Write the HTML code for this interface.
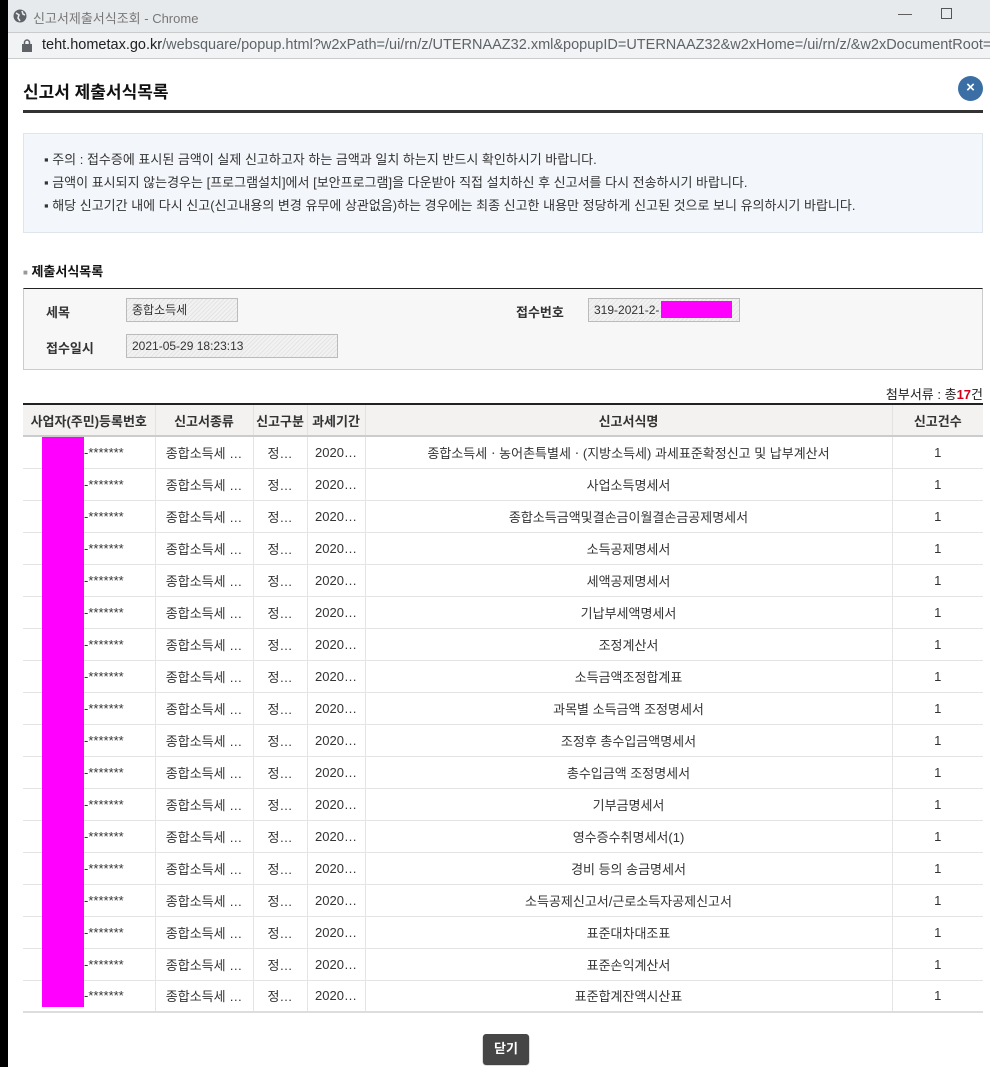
<!DOCTYPE html>
<html><head><meta charset="utf-8"><style>
*{margin:0;padding:0;box-sizing:border-box}
body{width:990px;height:1067px;overflow:hidden;background:#fff;font-family:"Liberation Sans","Noto Sans CJK KR","NanumGothic",sans-serif;font-size:12px;color:#333;position:relative}
.abs{position:absolute}
.strip{left:0;top:0;width:8px;height:1067px;background:#000}
.tb{left:8px;top:0;width:982px;height:33px;background:#e7eaed;border-bottom:1px solid #c9cbcd}
.ab{left:8px;top:33px;width:982px;height:26px;background:#f1f3f4;border-bottom:1px solid #c9cbcd}
.inp{background:repeating-linear-gradient(135deg,#f2f2f2 0 2px,#e4e4e4 2px 3px);border:1px solid #bbb;font-size:12px;padding-left:5px;line-height:22px;color:#333}
table{border-collapse:collapse;position:absolute;left:23px;top:403px;width:960px;border-top:2px solid #222}
th{background:#f3f2f0;height:32px;font-size:13px;color:#333;border-bottom:2px solid #ccc;border-left:1px solid #e2e2e2;font-weight:bold}
td{height:32px;border-bottom:1px solid #e4e4e4;border-left:1px solid #e4e4e4;text-align:center;font-size:13px;color:#333}
tr:last-child td{border-bottom:2px solid #ddd}
th:first-child,td:first-child{border-left:none}
.notice div{height:23px;line-height:23px}
</style></head><body>
<div class="abs strip"></div>
<div class="abs tb">
<svg class="abs" style="left:5px;top:9px" width="14" height="14"><circle cx="7" cy="7" r="6.5" fill="#5f6368"/><path d="M3 4 L6 6 L5 9 L7 12 M9 2 L10 5 L12 6" stroke="#e7eaed" stroke-width="1.6" fill="none"/></svg>
<span class="abs" style="left:25px;top:8px;font-size:13px;color:#777">신고서제출서식조회 - Chrome</span>
<span class="abs" style="left:890px;top:5px;font-size:14px;color:#555">—</span>
<span class="abs" style="left:933px;top:8px;width:11px;height:11px;border:1px solid #555"></span>
</div>
<div class="abs ab">
<svg class="abs" style="left:14px;top:6px" width="10" height="13"><rect x="0" y="5" width="10" height="8" fill="#5f6368"/><path d="M2.5 5V3.5a2.5 2.5 0 0 1 5 0V5" stroke="#5f6368" stroke-width="1.5" fill="none"/></svg>
<span class="abs" style="left:34px;top:4px;font-size:14.5px;color:#202124;white-space:nowrap">teht.hometax.go.kr<span style="color:#5f6368">/websquare/popup.html?w2xPath=/ui/rn/z/UTERNAAZ32.xml&amp;popupID=UTERNAAZ32&amp;w2xHome=/ui/rn/z/&amp;w2xDocumentRoot=</span></span>
</div>
<div class="abs" style="left:23px;top:78px;font-size:17px;font-weight:bold;color:#111">신고서 제출서식목록</div>
<div class="abs" style="left:958px;top:76px;width:25px;height:25px;border-radius:50%;background:#3a6ea5;color:#fff;text-align:center;line-height:24px;font-size:15px;font-weight:bold">×</div>
<div class="abs" style="left:23px;top:110px;width:960px;height:3px;background:#333"></div>
<div class="abs notice" style="left:23px;top:133px;width:960px;height:100px;background:#f3f6fa;border:1px solid #dfe5ec;padding:14px 0 0 20px;font-size:13px;color:#333">
<div>▪ 주의 : 접수증에 표시된 금액이 실제 신고하고자 하는 금액과 일치 하는지 반드시 확인하시기 바랍니다.</div>
<div>▪ 금액이 표시되지 않는경우는 [프로그램설치]에서 [보안프로그램]을 다운받아 직접 설치하신 후 신고서를 다시 전송하시기 바랍니다.</div>
<div>▪ 해당 신고기간 내에 다시 신고(신고내용의 변경 유무에 상관없음)하는 경우에는 최종 신고한 내용만 정당하게 신고된 것으로 보니 유의하시기 바랍니다.</div>
</div>
<div class="abs" style="left:23px;top:261px;font-size:13px;font-weight:bold;color:#111"><span style="color:#999;font-size:8px;vertical-align:middle">■</span> 제출서식목록</div>
<div class="abs" style="left:23px;top:288px;width:960px;height:82px;background:#f7f7f7;border:1px solid #ccc;border-top:1px solid #222"></div>
<div class="abs" style="left:46px;top:302px;font-size:13px;font-weight:bold">세목</div>
<div class="abs inp" style="left:126px;top:298px;width:112px;height:24px">종합소득세</div>
<div class="abs" style="left:46px;top:338px;font-size:13px;font-weight:bold">접수일시</div>
<div class="abs inp" style="left:126px;top:334px;width:212px;height:24px">2021-05-29 18:23:13</div>
<div class="abs" style="left:516px;top:302px;font-size:13px;font-weight:bold">접수번호</div>
<div class="abs inp" style="left:588px;top:298px;width:152px;height:24px">319-2021-2-</div>
<div class="abs" style="left:661px;top:301px;width:71px;height:17px;background:#f0f"></div>
<div class="abs" style="right:7px;top:384px;font-size:13px;color:#222">첨부서류 : 총<b style="color:#d0021b">17</b>건</div>
<table>
<tr><th style="width:132px">사업자(주민)등록번호</th><th style="width:98px">신고서종류</th><th style="width:54px">신고구분</th><th style="width:58px">과세기간</th><th>신고서식명</th><th style="width:91px">신고건수</th></tr>
</table>
<div class="abs" style="left:42px;top:437px;width:42px;height:570px;background:#f0f"></div>
<div class="abs" style="left:483px;top:1034px;width:46px;height:30px;background:#464646;border-radius:3px;color:#fff;font-weight:bold;font-size:13px;text-align:center;line-height:29px;box-shadow:0 1px 1px #222">닫기</div>
<script>
var n=["종합소득세ㆍ농어촌특별세ㆍ(지방소득세) 과세표준확정신고 및 납부계산서","사업소득명세서","종합소득금액및결손금이월결손금공제명세서","소득공제명세서","세액공제명세서","기납부세액명세서","조정계산서","소득금액조정합계표","과목별 소득금액 조정명세서","조정후 총수입금액명세서","총수입금액 조정명세서","기부금명세서","영수증수취명세서(1)","경비 등의 송금명세서","소득공제신고서/근로소득자공제신고서","표준대차대조표","표준손익계산서","표준합계잔액시산표"];
var h="";n.forEach(function(x){h+='<tr><td style="text-align:left;padding-left:61px">-*******</td><td>종합소득세 …</td><td>정…</td><td>2020…</td><td>'+x+'</td><td>1</td></tr>'});
document.querySelector("table tbody").insertAdjacentHTML("beforeend",h);
</script>
</body></html>
